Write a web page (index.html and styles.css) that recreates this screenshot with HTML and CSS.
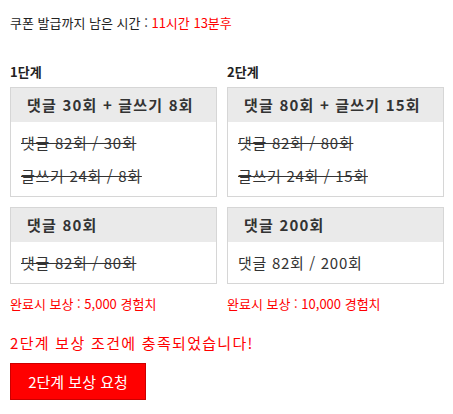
FILE: index.html
```html
<!DOCTYPE html>
<html lang="ko">
<head>
<meta charset="utf-8">
<link rel="stylesheet" href="styles.css">
</head>
<body>
<div class="page">
  <p class="timer">쿠폰 발급까지 남은 시간 : <span class="red">11시간 13분후</span></p>
  <div class="stages">
    <div class="stage stage-1">
      <h3 class="stage-title">1단계</h3>
      <div class="box">
        <div class="box-head">댓글 30회 + 글쓰기 8회</div>
        <div class="box-body">
          <div class="line done">댓글 82회 / 30회</div>
          <div class="line done">글쓰기 24회 / 8회</div>
        </div>
      </div>
      <div class="box">
        <div class="box-head">댓글 80회</div>
        <div class="box-body">
          <div class="line done">댓글 82회 / 80회</div>
        </div>
      </div>
      <p class="reward">완료시 보상 : 5,000 경험치</p>
    </div>
    <div class="stage stage-2">
      <h3 class="stage-title">2단계</h3>
      <div class="box">
        <div class="box-head">댓글 80회 + 글쓰기 15회</div>
        <div class="box-body">
          <div class="line done">댓글 82회 / 80회</div>
          <div class="line done">글쓰기 24회 / 15회</div>
        </div>
      </div>
      <div class="box">
        <div class="box-head">댓글 200회</div>
        <div class="box-body">
          <div class="line">댓글 82회 / 200회</div>
        </div>
      </div>
      <p class="reward">완료시 보상 : 10,000 경험치</p>
    </div>
  </div>
  <p class="notice">2단계 보상 조건에 충족되었습니다!</p>
  <button class="request">2단계 보상 요청</button>
</div>
</body>
</html>
```
FILE: styles.css
```css
* { box-sizing: border-box; }
html, body { margin: 0; padding: 0; background: #fff; }
body {
  font-family: "Noto Sans CJK KR", "Noto Sans", sans-serif;
  color: #222;
}
.page { padding: 10px; }
.timer {
  margin: 3px 0 0;
  font-size: 13px;
  line-height: 20px;
}
.red { color: #f00; }
.stages {
  display: grid;
  grid-template-columns: 207px 217px;
  column-gap: 10px;
  margin-top: 30px;
}
.stage-title {
  margin: 0 0 6px;
  font-size: 13px;
  line-height: 18px;
  font-weight: bold;
  color: #222;
}
.box {
  border: 1px solid #d6d6d6;
  margin-bottom: 10px;
}
.box-head {
  background: #eaeaea;
  height: 34px;
  line-height: 34px;
  padding-left: 16px;
  font-size: 15px;
  font-weight: bold;
  color: #333;
  letter-spacing: 1.2px;
  white-space: nowrap;
}
.box-body {
  padding: 4px 10px 4px;
}
.line {
  font-size: 15px;
  line-height: 33px;
  color: #333;
  letter-spacing: 0.7px;
}
.line.done { text-decoration: line-through; }
.reward {
  margin: 10px 0 0;
  font-size: 13px;
  line-height: 20px;
  color: #f00;
}
.notice {
  margin: 18px 0 0;
  font-size: 15px;
  line-height: 22px;
  color: #f00;
  letter-spacing: 1.3px;
}
.request {
  display: block;
  margin-top: 9px;
  width: 136px;
  height: 37px;
  background: #f00;
  border: 1px solid #c00;
  color: #fff;
  font-family: inherit;
  font-size: 15px;
  padding: 0;
}
```
